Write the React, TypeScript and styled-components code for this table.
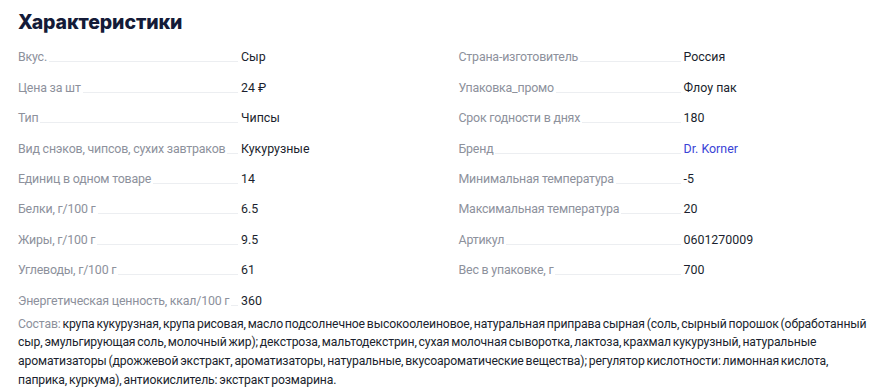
import React from "react";
import styled, { createGlobalStyle } from "styled-components";

const Global = createGlobalStyle`
  html, body { margin: 0; padding: 0; background: #fff; }
  body { font-family: "Roboto", "Noto Sans", sans-serif; -webkit-font-smoothing: antialiased; }
`;

const Page = styled.div`
  width: 895px;
  box-sizing: border-box;
  padding: 8px 18px 0 18px;
`;

const Title = styled.h2`
  margin: 0;
  font-family: "Inter", "Noto Sans", sans-serif;
  font-weight: 800;
  font-size: 19.5px;
  line-height: 28px;
  color: #141b38;
  letter-spacing: -0.1px;
`;

const Columns = styled.div`
  display: grid;
  grid-template-columns: 1fr 1fr;
  column-gap: 22px;
`;

const Column = styled.div`
  display: flex;
  flex-direction: column;
`;

const Row = styled.div<{ $labelWidth: number }>`
  display: grid;
  grid-template-columns: ${(p) => p.$labelWidth}px 1fr;
  align-items: end;
  height: 30.4px;
  font-size: 12.4px;
  line-height: 18px;
`;

const LabelCell = styled.div`
  display: flex;
  align-items: flex-end;
  padding-right: 3px;
  min-width: 0;
`;

const Label = styled.span`
  color: #8d919c;
  white-space: nowrap;
  letter-spacing: -0.2px;
`;

const Leader = styled.span`
  flex: 1;
  min-width: 6px;
  margin-left: 2px;
  margin-bottom: 4px;
  border-bottom: 1px solid #eceef1;
`;

const Value = styled.span<{ $link?: boolean }>`
  color: ${(p) => (p.$link ? "#3a43d6" : "#1b1f2e")};
  white-space: nowrap;
`;

const Composition = styled.p`
  margin: 5px 0 0 0;
  font-size: 12.2px;
  letter-spacing: -0.14px;
  word-spacing: -1px;
  line-height: 18.7px;
  color: #1b1f2e;
`;

const CompLabel = styled.span`
  color: #8d919c;
`;

type Item = { label: string; value: string; link?: boolean };

const left: Item[] = [
  { label: "Вкус.", value: "Сыр" },
  { label: "Цена за шт", value: "24 ₽" },
  { label: "Тип", value: "Чипсы" },
  { label: "Вид снэков, чипсов, сухих завтраков", value: "Кукурузные" },
  { label: "Единиц в одном товаре", value: "14" },
  { label: "Белки, г/100 г", value: "6.5" },
  { label: "Жиры, г/100 г", value: "9.5" },
  { label: "Углеводы, г/100 г", value: "61" },
  { label: "Энергетическая ценность, ккал/100 г", value: "360" },
];

const right: Item[] = [
  { label: "Страна-изготовитель", value: "Россия" },
  { label: "Упаковка_промо", value: "Флоу пак" },
  { label: "Срок годности в днях", value: "180" },
  { label: "Бренд", value: "Dr. Korner", link: true },
  { label: "Минимальная температура", value: "-5" },
  { label: "Максимальная температура", value: "20" },
  { label: "Артикул", value: "0601270009" },
  { label: "Вес в упаковке, г", value: "700" },
];

const Specs = ({ items, labelWidth }: { items: Item[]; labelWidth: number }) => (
  <Column>
    {items.map((it) => (
      <Row key={it.label} $labelWidth={labelWidth}>
        <LabelCell>
          <Label>{it.label}</Label>
          <Leader />
        </LabelCell>
        <Value $link={it.link}>{it.value}</Value>
      </Row>
    ))}
  </Column>
);

export default function App() {
  return (
    <Page>
      <Global />
      <Title>Характеристики</Title>
      <Columns>
        <Specs items={left} labelWidth={223} />
        <Specs items={right} labelWidth={225} />
      </Columns>
      <Composition>
        <CompLabel>Состав: </CompLabel>
        крупа кукурузная, крупа рисовая, масло подсолнечное высокоолеиновое, натуральная приправа сырная (соль, сырный порошок (обработанный сыр, эмульгирующая соль, молочный жир); декстроза, мальтодекстрин, сухая молочная сыворотка, лактоза, крахмал кукурузный, натуральные ароматизаторы (дрожжевой экстракт, ароматизаторы, натуральные, вкусоароматические вещества); регулятор кислотности: лимонная кислота, паприка, куркума), антиокислитель: экстракт розмарина.
      </Composition>
    </Page>
  );
}
